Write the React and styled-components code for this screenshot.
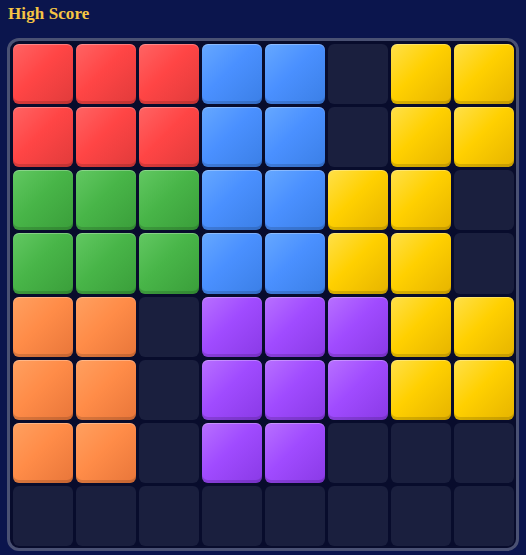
import React from "react";
import styled, { createGlobalStyle } from "styled-components";

const GlobalStyle = createGlobalStyle`
  html, body {
    margin: 0;
    padding: 0;
    background: #0b154d;
  }
  body {
    font-family: "Liberation Serif", serif;
  }
`;

const palette = {
  R: ["#ff6464", "#ff4545", "#e03b3b"],
  B: ["#66a8ff", "#4a90ff", "#3b7fe6"],
  G: ["#62c862", "#48b548", "#3a9e3a"],
  Y: ["#ffe04a", "#ffd000", "#e6b400"],
  O: ["#ffa060", "#ff8c48", "#e8763a"],
  P: ["#b870ff", "#a04bff", "#8a3ae6"],
};

const layout = [
  "RRRBBEYY",
  "RRRBBEYY",
  "GGGBBYYE",
  "GGGBBYYE",
  "OOEPPPYY",
  "OOEPPPYY",
  "OOEPPEEE",
  "EEEEEEEE",
];

const Page = styled.div`
  width: 526px;
  height: 555px;
  box-sizing: border-box;
  padding: 0 7px;
  display: flex;
  flex-direction: column;
  background: #0b154d;
`;

const Title = styled.h1`
  margin: 0;
  padding: 3px 0 0 1px;
  height: 38px;
  flex: none;
  box-sizing: border-box;
  font-family: "Liberation Serif", "DejaVu Serif", serif;
  font-weight: 700;
  font-size: 17px;
  line-height: 22px;
  color: #f6c544;
  letter-spacing: 0.1px;
`;

const Board = styled.div`
  width: 512px;
  height: 513px;
  flex: none;
  box-sizing: border-box;
  border: 3px solid #4a5173;
  border-radius: 12px;
  background: #080c2c;
  padding: 3px 2px 2px 3px;
  display: grid;
  grid-template-columns: repeat(8, 1fr);
  grid-template-rows: repeat(8, 1fr);
  gap: 3px;
`;

const Cell = styled.div`
  border-radius: 6px;
  background: ${({ $c }) =>
    $c
      ? `linear-gradient(135deg, ${$c[0]} 0%, ${$c[1]} 45%, ${$c[2]} 100%)`
      : "#1a1f3e"};
  box-shadow: ${({ $c }) =>
    $c
      ? "inset 0 1px 0 rgba(255,255,255,0.28), inset 0 -3px 0 rgba(0,0,0,0.14)"
      : "none"};
`;

export default function App() {
  return (
    <>
      <GlobalStyle />
      <Page>
        <Title>High Score</Title>
        <Board>
          {layout.flatMap((row, r) =>
            row.split("").map((k, c) => (
              <Cell key={`${r}-${c}`} $c={palette[k]} />
            ))
          )}
        </Board>
      </Page>
    </>
  );
}
